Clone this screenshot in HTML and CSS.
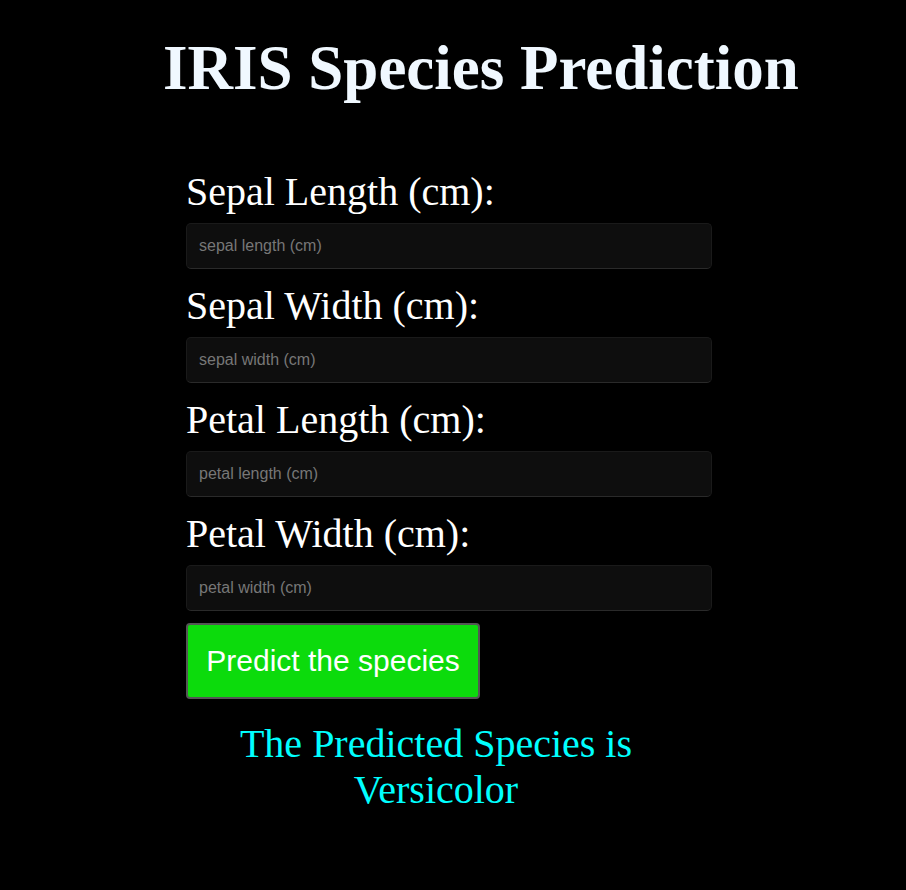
FILE: index.html
```html
<!DOCTYPE html>
<html>
<head>
<meta charset="utf-8">
<link rel="stylesheet" href="styles.css">
</head>
<body>
<div class="page">
  <h1 class="title">IRIS Species Prediction</h1>
  <form class="form">
    <label class="label" for="sl">Sepal Length (cm):</label>
    <input class="field" id="sl" type="text" placeholder="sepal length (cm)">
    <label class="label" for="sw">Sepal Width (cm):</label>
    <input class="field" id="sw" type="text" placeholder="sepal width (cm)">
    <label class="label" for="pl">Petal Length (cm):</label>
    <input class="field" id="pl" type="text" placeholder="petal length (cm)">
    <label class="label" for="pw">Petal Width (cm):</label>
    <input class="field" id="pw" type="text" placeholder="petal width (cm)">
    <button class="btn" type="button">Predict the species</button>
  </form>
  <div class="result">The Predicted Species is<br>Versicolor</div>
</div>
</body>
</html>
```
FILE: styles.css
```css
html, body {
  margin: 0;
  padding: 0;
  background: #000;
}
body {
  font-family: "Liberation Serif", "Times New Roman", serif;
  color: #fff;
}
.page {
  width: 906px;
  min-height: 890px;
  display: flex;
  flex-direction: column;
}
.title {
  margin: 34px 0 0 163px;
  font-size: 63px;
  line-height: 68px;
  font-weight: bold;
  color: #f0f8ff;
}
.form {
  margin: 67px 0 0 186px;
  width: 526px;
  display: flex;
  flex-direction: column;
}
.label {
  font-size: 40px;
  line-height: 46px;
  margin-bottom: 8px;
}
.field {
  box-sizing: border-box;
  height: 46px;
  margin: 0 0 14px 0;
  padding: 0 12px;
  background: #0e0e0e;
  border: 1px solid #1a1a1a;
  border-bottom-color: #2a2a2a;
  border-radius: 5px;
  font-family: "Liberation Sans", Arial, sans-serif;
  font-size: 16px;
  color: #ccc;
  outline: none;
}
.field::placeholder {
  color: #777;
}
.btn {
  align-self: flex-start;
  box-sizing: border-box;
  width: 294px;
  height: 76px;
  margin-top: -2px;
  padding: 0;
  background: #0cdb0c;
  border: 2px solid #555;
  border-radius: 4px;
  color: #fff;
  font-family: "Liberation Sans", Arial, sans-serif;
  font-size: 30px;
  cursor: pointer;
}
.result {
  margin: 22px 0 0 0;
  width: 872px;
  text-align: center;
  font-size: 40px;
  line-height: 46px;
  color: #00ffff;
}
```
